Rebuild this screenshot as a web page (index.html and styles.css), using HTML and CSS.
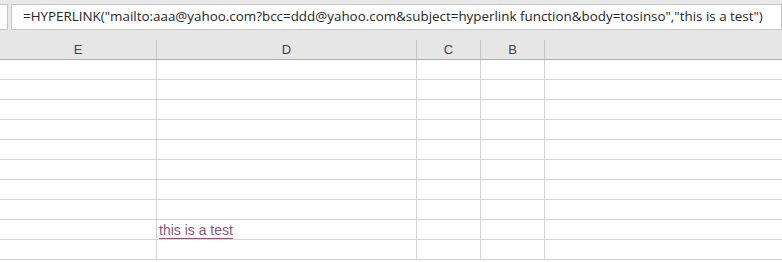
FILE: index.html
```html
<!DOCTYPE html>
<html lang="en">
<head>
    <meta charset="UTF-8">
    <title>HYPERLINK</title>
    <link rel="stylesheet" href="styles.css">
</head>
<body>
    <div class="bar">
        <div class="name-box"></div>
        <div class="formula">=HYPERLINK("mailto:aaa@yahoo.com?bcc=ddd@yahoo.com&amp;subject=hyperlink function&amp;body=tosinso","this is a test")</div>
    </div>

    <div class="sheet">
        <div class="row head">
            <div class="cell">E</div>
            <div class="cell">D</div>
            <div class="cell">C</div>
            <div class="cell">B</div>
            <div class="cell last"></div>
        </div>
        <div class="row"><div class="cell"></div><div class="cell"></div><div class="cell"></div><div class="cell"></div><div class="cell last"></div></div>
        <div class="row"><div class="cell"></div><div class="cell"></div><div class="cell"></div><div class="cell"></div><div class="cell last"></div></div>
        <div class="row"><div class="cell"></div><div class="cell"></div><div class="cell"></div><div class="cell"></div><div class="cell last"></div></div>
        <div class="row"><div class="cell"></div><div class="cell"></div><div class="cell"></div><div class="cell"></div><div class="cell last"></div></div>
        <div class="row"><div class="cell"></div><div class="cell"></div><div class="cell"></div><div class="cell"></div><div class="cell last"></div></div>
        <div class="row"><div class="cell"></div><div class="cell"></div><div class="cell"></div><div class="cell"></div><div class="cell last"></div></div>
        <div class="row"><div class="cell"></div><div class="cell"></div><div class="cell"></div><div class="cell"></div><div class="cell last"></div></div>
        <div class="row"><div class="cell"></div><div class="cell"></div><div class="cell"></div><div class="cell"></div><div class="cell last"></div></div>
        <div class="row"><div class="cell"></div><div class="cell"><a class="link" href="#">this is a test</a></div><div class="cell"></div><div class="cell"></div><div class="cell last"></div></div>
        <div class="row"><div class="cell"></div><div class="cell"></div><div class="cell"></div><div class="cell"></div><div class="cell last"></div></div>
    </div>
</body>
</html>
```

FILE: styles.css
```css
*{
    margin: 0;
    padding: 0;
    box-sizing: border-box;
}
body{
    width: 782px;
    height: 262px;
    overflow: hidden;
    background: #fff;
    font-family: "Liberation Sans", Arial, sans-serif;
}
.bar{
    display: flex;
    gap: 3px;
    height: 30px;
    padding-top: 4px;
    background: #e9e9e9;
}
.name-box{
    width: 8px;
    height: 26px;
    background: #fff;
    border: 1px solid #c6c6c6;
    border-left: none;
}
.formula{
    flex: 1;
    height: 26px;
    line-height: 23px;
    padding-left: 11px;
    background: #fff;
    border: 1px solid #c6c6c6;
    color: #262626;
    font-family: "Open Sans", "Liberation Sans", sans-serif;
    font-size: 13.4px;
    white-space: nowrap;
    overflow: hidden;
}
.row{
    display: grid;
    grid-template-columns: 157px 260px 64px 64px 1fr;
    height: 20px;
    border-bottom: 1px solid #d4d4d4;
}
.row.head{
    height: 30px;
    padding-top: 10px;
    background: #e6e6e6;
    border-bottom: 1px solid #ababab;
}
.cell{
    border-right: 1px solid #d4d4d4;
    line-height: 21px;
    font-size: 14px;
}
.head .cell{
    line-height: 19px;
    border-right-color: #c4c4c4;
    text-align: center;
    color: #444;
    font-size: 13px;
}
.cell.last{
    border-right: none;
}
.link{
    display: inline-block;
    padding-left: 2px;
    color: #8a5577;
    text-decoration: underline;
    text-underline-offset: 3px;
}
```
